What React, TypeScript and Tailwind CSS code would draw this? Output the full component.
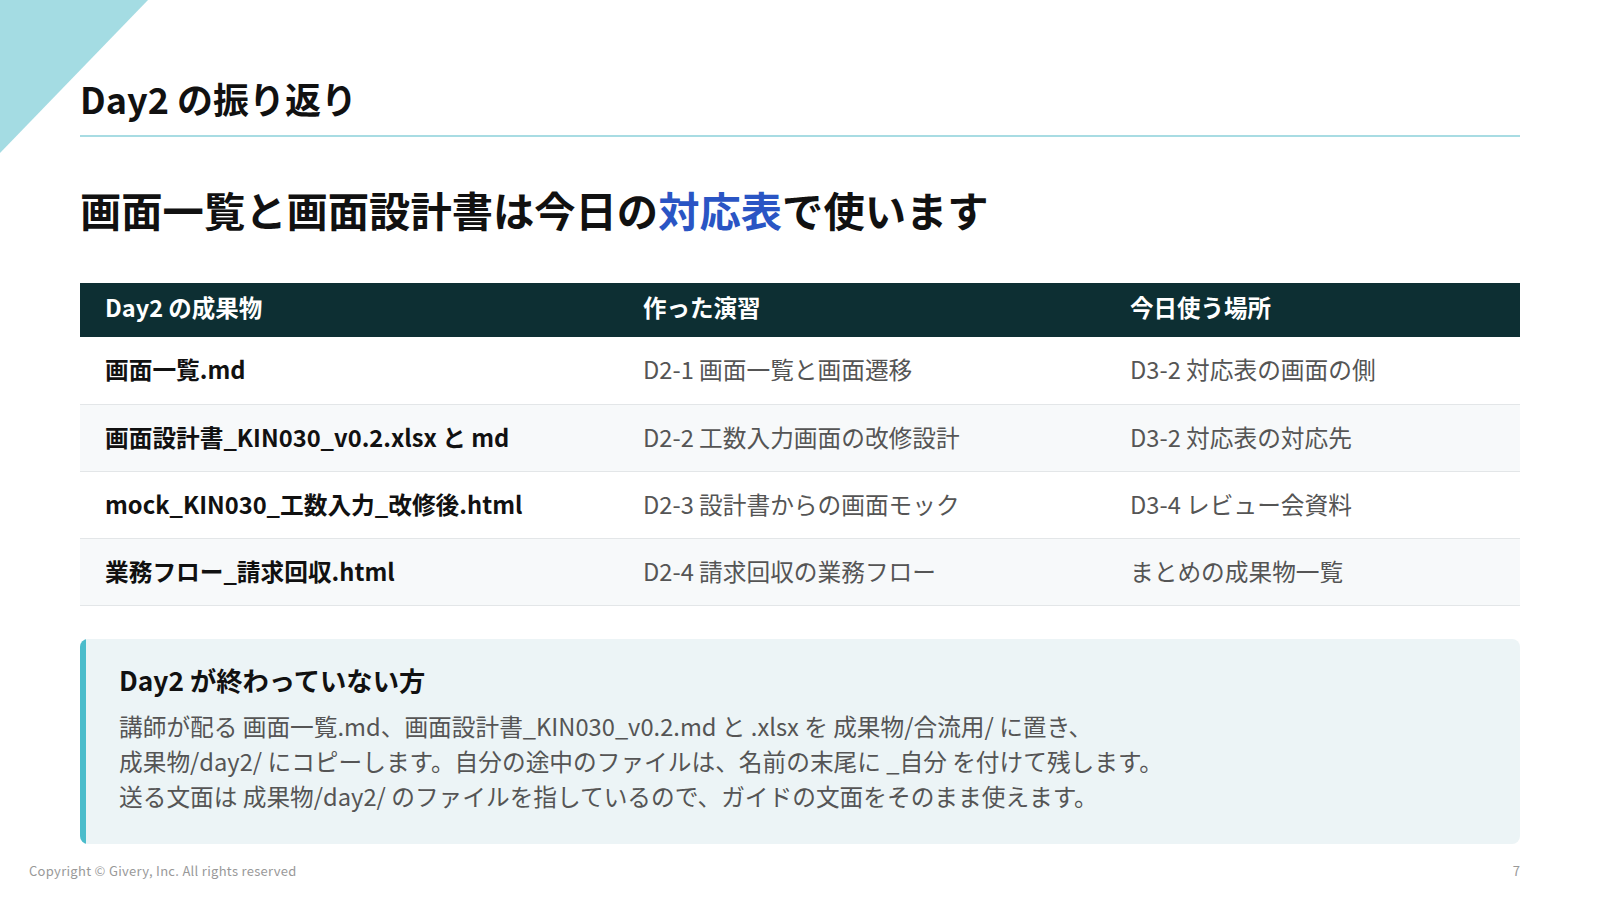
const rows = [
  {
    file: "画面一覧.md",
    exercise: "D2-1 画面一覧と画面遷移",
    place: "D3-2 対応表の画面の側",
  },
  {
    file: "画面設計書_KIN030_v0.2.xlsx と md",
    exercise: "D2-2 工数入力画面の改修設計",
    place: "D3-2 対応表の対応先",
  },
  {
    file: "mock_KIN030_工数入力_改修後.html",
    exercise: "D2-3 設計書からの画面モック",
    place: "D3-4 レビュー会資料",
  },
  {
    file: "業務フロー_請求回収.html",
    exercise: "D2-4 請求回収の業務フロー",
    place: "まとめの成果物一覧",
  },
];

export default function App() {
  return (
    <div className="relative h-[900px] w-[1600px] overflow-hidden bg-white font-['Noto_Sans_CJK_JP','Noto_Sans',sans-serif] text-[#111]">
      <svg
        className="absolute left-0 top-0"
        width="150"
        height="155"
        viewBox="0 0 150 155"
      >
        <polygon points="0,0 148,0 0,153" fill="#a4dce3" />
      </svg>

      <div className="px-[80px] pt-[76px]">
        <h1 className="text-[36px] font-bold leading-[44px]">Day2 の振り返り</h1>
        <div className="mt-[15px] h-[2px] bg-[#a8dce3]" />

        <h2 className="mt-[46px] text-[41.3px] font-bold leading-[52px]">
          画面一覧と画面設計書は今日の
          <span className="text-[#2a55c4]">対応表</span>
          で使います
        </h2>

        <table className="mt-[48px] w-full border-collapse text-left">
          <thead>
            <tr className="h-[54px] bg-[#0d2f33] text-white">
              <th className="w-[539px] pb-[4px] pl-[25px] text-[23.5px] font-bold">Day2 の成果物</th>
              <th className="w-[487px] pb-[4px] pl-[24px] text-[23.5px] font-bold">作った演習</th>
              <th className="pb-[4px] pl-[24px] text-[23.5px] font-bold">今日使う場所</th>
            </tr>
          </thead>
          <tbody>
            {rows.map((row, i) => (
              <tr
                key={row.file}
                className={
                  "h-[67px] border-b border-[#e3e6e8] " +
                  (i % 2 === 1 ? "bg-[#f7f9fa]" : "bg-white")
                }
              >
                <td className="pl-[25px] text-[23.7px] font-bold text-[#111]">{row.file}</td>
                <td className="pl-[24px] text-[23.7px] text-[#555]">{row.exercise}</td>
                <td className="pl-[24px] text-[23.7px] text-[#555]">{row.place}</td>
              </tr>
            ))}
          </tbody>
        </table>

        <div className="mt-[33px] flex h-[205px] overflow-hidden rounded-[8px] bg-[#ecf4f6]">
          <div className="w-[6px] shrink-0 bg-[#4bbccb]" />
          <div className="pl-[33px] pt-[22px]">
            <p className="text-[26.3px] font-bold leading-[38px] text-[#111]">Day2 が終わっていない方</p>
            <div className="mt-[10px] text-[23.7px] leading-[35px] text-[#555]">
              <p>講師が配る 画面一覧.md、画面設計書_KIN030_v0.2.md と .xlsx を 成果物/合流用/ に置き、</p>
              <p>成果物/day2/ にコピーします。自分の途中のファイルは、名前の末尾に _自分 を付けて残します。</p>
              <p>送る文面は 成果物/day2/ のファイルを指しているので、ガイドの文面をそのまま使えます。</p>
            </div>
          </div>
        </div>
      </div>

      <div className="absolute bottom-[20px] left-[29px] text-[13px] tracking-[0.3px] text-[#999]">
        Copyright © Givery, Inc. All rights reserved
      </div>
      <div className="absolute bottom-[20px] right-[80px] text-[13px] text-[#999]">7</div>
    </div>
  );
}
